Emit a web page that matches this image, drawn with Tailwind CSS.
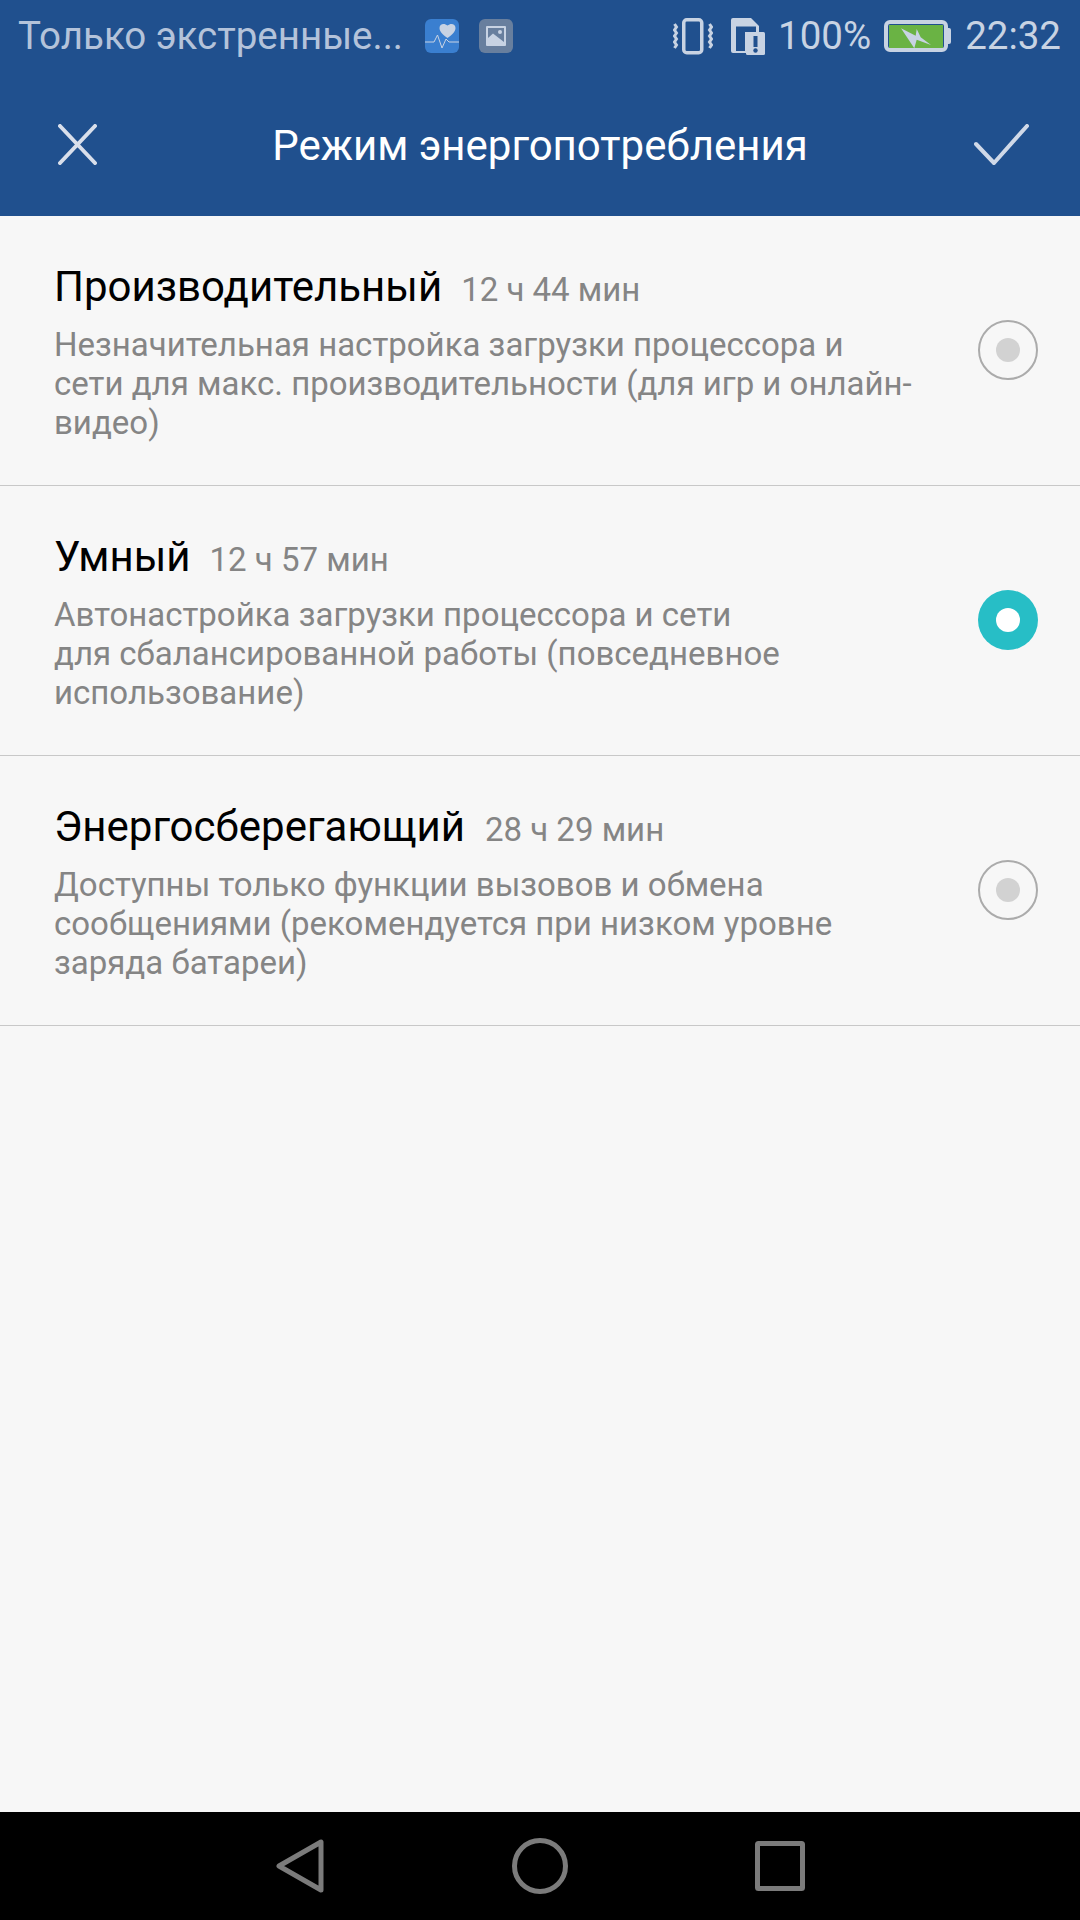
<!DOCTYPE html>
<html lang="ru">
<head>
    <meta charset="UTF-8">
    <title>Режим энергопотребления</title>
    <script src="https://cdn.jsdelivr.net/npm/@tailwindcss/browser@4"></script>
</head>
<body class="bg-[#f7f7f7] font-[Roboto,sans-serif]">
<div class="w-[1080px] h-[1920px] flex flex-col overflow-hidden">
    <!-- status bar -->
    <div class="h-[72px] bg-[#20508e] flex items-center pl-[18px] pr-[19px] text-[38.5px] text-[#c8d3e3]">
        <span class="leading-none text-[#b4c3da]">Только экстренные...</span>
        <svg class="ml-[22px]" width="34" height="34" viewBox="0 0 34 34">
            <rect width="34" height="34" rx="6" fill="#3a7fd0"/>
            <path d="M22.5 19 C17.5 15.5 14.5 12.5 14.5 9 C14.5 5 19 3.5 22.5 6.5 C26 3.5 30.5 5 30.5 9 C30.5 12.5 27.5 15.5 22.5 19Z" fill="#c8d3e3"/>
            <path d="M0 23 H9 L12.5 16 L17 29 L21 20 L24 23 H34" fill="none" stroke="#c8d3e3" stroke-width="1"/>
        </svg>
        <svg class="ml-[20px]" width="34" height="34" viewBox="0 0 34 34">
            <rect width="34" height="34" rx="6" fill="#687f9e"/>
            <rect x="7" y="7" width="20" height="20" rx="1" fill="#c8d3e3"/>
            <rect x="9" y="9" width="16" height="16" fill="#687f9e"/>
            <path d="M9 19 L14 14.5 L25 23 V25 H9 Z" fill="#c8d3e3"/>
            <circle cx="21" cy="13" r="2" fill="#c8d3e3"/>
        </svg>
        <div class="flex-1"></div>
        <svg width="40" height="37" viewBox="0 0 40 37">
            <rect x="10.75" y="1.75" width="18" height="33" rx="3" fill="none" stroke="#c8d3e3" stroke-width="3.5"/>
            <path d="M1.5 6 L3.5 9 L1.5 12 L3.5 15 L1.5 18 L3.5 21 L1.5 24 L3.5 27 L1.5 30" fill="none" stroke="#c8d3e3" stroke-width="3"/>
            <path d="M36.5 6 L38.5 9 L36.5 12 L38.5 15 L36.5 18 L38.5 21 L36.5 24 L38.5 27 L36.5 30" fill="none" stroke="#c8d3e3" stroke-width="3"/>
        </svg>
        <svg class="ml-[18px]" width="34" height="37" viewBox="0 0 34 37">
            <path fill-rule="evenodd" d="M2 0 H20 L28 8 V13 H28 V35 H2 Q0 35 0 33 V2 Q0 0 2 0 Z M5 8.5 V33 H14 V14 H25 V8.5 Z" fill="#c8d3e3"/>
            <rect x="15" y="14" width="19" height="23" rx="1.5" fill="#c8d3e3"/>
            <rect x="22.5" y="18" width="4" height="11" fill="#20508e"/>
            <circle cx="24.5" cy="32.5" r="2.2" fill="#20508e"/>
        </svg>
        <span class="ml-[13px] leading-none">100%</span>
        <svg class="ml-[13px]" width="67" height="33" viewBox="0 0 67 33">
            <rect x="2" y="2" width="60" height="28" rx="4" fill="#20508e" stroke="#c8d3e3" stroke-width="4"/>
            <rect x="5" y="5" width="54" height="23" fill="#6ab344"/>
            <path d="M64 8 H65 Q67 8 67 10 V22 Q67 24 65 24 H64 Z" fill="#c8d3e3"/>
            <path d="M17 8.3 L31.7 15.7 L32.7 9 L36.7 17.3 L47 25 L32.7 19.7 L30.3 28.3 Z" fill="#c8d3e3"/>
        </svg>
        <span class="ml-[14px] leading-none">22:32</span>
    </div>

    <!-- header -->
    <div class="h-[144px] bg-[#20508e] grid grid-cols-[1fr_auto_1fr] items-center">
        <svg class="ml-[58px]" width="39" height="41" viewBox="0 0 39 41" fill="none" stroke="#d9dfeb" stroke-width="4" stroke-linecap="round">
            <path d="M2 2 L37 39 M37 2 L2 39"/>
        </svg>
        <span class="text-[42px] text-white leading-none pt-[4px]">Режим энергопотребления</span>
        <svg class="justify-self-end mr-[51px]" width="55" height="41" viewBox="0 0 55 41" fill="none" stroke="#d0d9e8" stroke-width="4" stroke-linecap="round" stroke-linejoin="round">
            <path d="M2 20 L20 39 L53 2"/>
        </svg>
    </div>

    <!-- modes -->
    <div class="h-[270px] border-b border-[#c8c8c8] flex items-center pl-[54px] pr-[42px]">
        <div class="w-[860px] pt-[4px]">
            <div class="flex items-baseline">
                <span class="text-[42px] leading-[48px] text-black">Производительный</span>
                <span class="ml-[19px] text-[33px] text-[#858585]">12 ч 44 мин</span>
            </div>
            <p class="mt-[10px] text-[33px] leading-[39px] text-[#858585]">Незначительная настройка загрузки процессора и<br>сети для макс. производительности (для игр и онлайн-<br>видео)</p>
        </div>
        <div class="ml-auto mb-[1px] w-[60px] h-[60px] rounded-full border-2 border-[#ababab] flex items-center justify-center">
            <div class="w-[24px] h-[24px] rounded-full bg-[#d2d2d2]"></div>
        </div>
    </div>
    <div class="h-[270px] border-b border-[#c8c8c8] flex items-center pl-[54px] pr-[42px]">
        <div class="w-[860px] pt-[4px]">
            <div class="flex items-baseline">
                <span class="text-[42px] leading-[48px] text-black">Умный</span>
                <span class="ml-[19px] text-[33px] text-[#858585]">12 ч 57 мин</span>
            </div>
            <p class="mt-[10px] text-[33px] leading-[39px] text-[#858585]">Автонастройка загрузки процессора и сети<br>для сбалансированной работы (повседневное<br>использование)</p>
        </div>
        <div class="ml-auto mb-[1px] w-[60px] h-[60px] rounded-full bg-[#27bec6] flex items-center justify-center">
            <div class="w-[24px] h-[24px] rounded-full bg-white"></div>
        </div>
    </div>
    <div class="h-[270px] border-b border-[#c8c8c8] flex items-center pl-[54px] pr-[42px]">
        <div class="w-[860px] pt-[4px]">
            <div class="flex items-baseline">
                <span class="text-[42px] leading-[48px] text-black">Энергосберегающий</span>
                <span class="ml-[20px] text-[33px] text-[#858585]">28 ч 29 мин</span>
            </div>
            <p class="mt-[10px] text-[33px] leading-[39px] text-[#858585]">Доступны только функции вызовов и обмена<br>сообщениями (рекомендуется при низком уровне<br>заряда батареи)</p>
        </div>
        <div class="ml-auto mb-[1px] w-[60px] h-[60px] rounded-full border-2 border-[#ababab] flex items-center justify-center">
            <div class="w-[24px] h-[24px] rounded-full bg-[#d2d2d2]"></div>
        </div>
    </div>

    <div class="flex-1"></div>

    <!-- nav bar -->
    <div class="h-[108px] bg-black flex items-center justify-center pl-[1px] shrink-0">
        <svg width="48" height="54" viewBox="0 0 48 54" fill="none" stroke="#7b7b7b" stroke-width="5" stroke-linejoin="round">
            <path d="M3 27 L45 3 V51 Z"/>
        </svg>
        <svg class="ml-[188px]" width="56" height="56" viewBox="0 0 56 56" fill="none" stroke="#7b7b7b" stroke-width="5">
            <circle cx="28" cy="28" r="25.5"/>
        </svg>
        <svg class="ml-[187px]" width="50" height="50" viewBox="0 0 50 50" fill="none" stroke="#7b7b7b" stroke-width="5" stroke-linejoin="round">
            <rect x="2.5" y="2.5" width="45" height="45" rx="1"/>
        </svg>
    </div>
</div>
</body>
</html>
